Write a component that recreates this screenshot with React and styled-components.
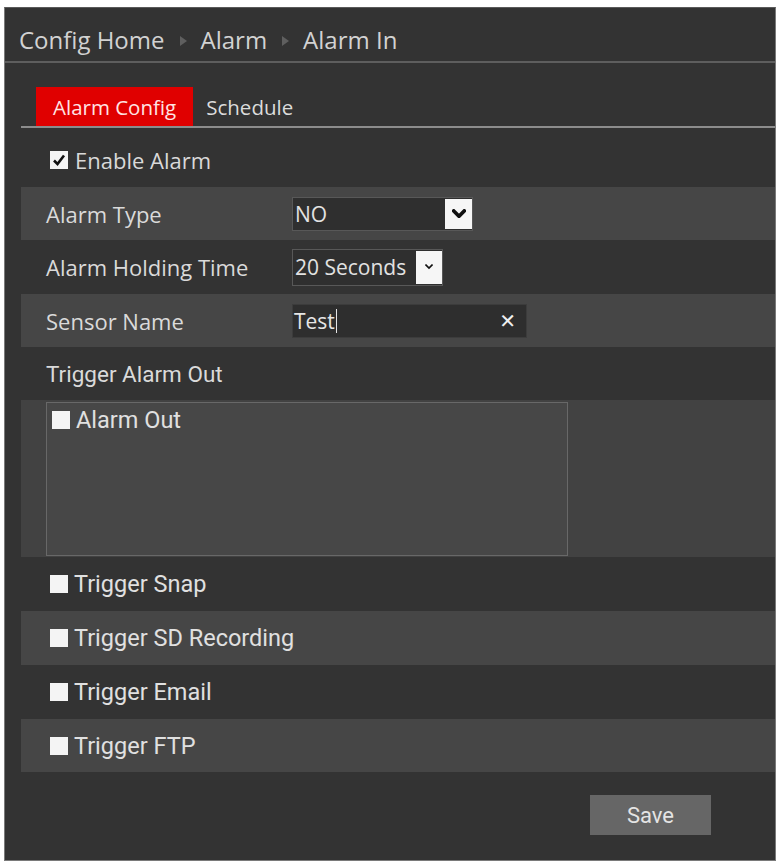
import React from "react";
import styled, { createGlobalStyle } from "styled-components";

const GlobalStyle = createGlobalStyle`
  html, body { margin: 0; padding: 0; background: #ffffff; }
  * { box-sizing: border-box; }
`;

const Panel = styled.div`
  margin: 7px 3px 0 4px;
  width: 772px;
  height: 854px;
  background: #333333;
  border: 1px solid #7a7a7a;
  border-top-color: #5a5a5a;
  font-family: "Open Sans", "Liberation Sans", sans-serif;
  color: #d9d9d9;
  display: flex;
  flex-direction: column;
`;

const Breadcrumb = styled.div`
  height: 55px;
  padding: 15px 0 0 14px;
  display: flex;
  align-items: flex-start;
  border-bottom: 2px solid #5e5e5e;
  font-size: 24px;
  line-height: 33px;
  color: #d2d2d2;
`;

const Crumb = styled.span`
  white-space: nowrap;
`;

const CrumbArrow = styled.span`
  display: inline-block;
  width: 0;
  height: 0;
  margin: 13px 14px 0 15px;
  border-top: 5px solid transparent;
  border-bottom: 5px solid transparent;
  border-left: 7px solid #5f5f5f;
`;

const Content = styled.div`
  padding-left: 16px;
  display: flex;
  flex-direction: column;
`;

const TabBar = styled.div`
  margin-top: 24px;
  padding-left: 15px;
  height: 41px;
  display: flex;
  align-items: stretch;
  border-bottom: 2px solid #8c8c8c;
`;

const Tab = styled.div`
  height: 39px;
  padding: 1px ${(p) => (p.$active ? "17px" : "13px")} 0;
  display: flex;
  align-items: center;
  font-size: 20.5px;
  white-space: nowrap;
  background: ${(p) => (p.$active ? "#e00000" : "transparent")};
  color: ${(p) => (p.$active ? "#ffe4e4" : "#dcdcdc")};
`;

const EnableRow = styled.div`
  height: 59px;
  padding: 5px 0 0 29px;
  display: flex;
  align-items: center;
  font-size: 22px;
`;

const Box = styled.span`
  flex: none;
  width: 18px;
  height: 18px;
  margin-right: ${(p) => p.$gap || 6}px;
  background: #f4f4f4;
  display: inline-flex;
  align-items: center;
  justify-content: center;
`;

const Row = styled.div`
  height: ${(p) => p.$h}px;
  background: ${(p) => (p.$light ? "#464646" : "#333333")};
  display: grid;
  grid-template-columns: 246px auto;
  align-items: center;
  padding-left: 25px;
  font-size: 22px;
`;

const Label = styled.span`
  white-space: nowrap;
  color: #dadada;
`;

const Select = styled.div`
  width: ${(p) => p.$w}px;
  height: ${(p) => p.$h}px;
  background: #2f2f2f;
  border: 1px solid #585858;
  display: flex;
  align-items: stretch;
  color: #e2e2e2;
  font-size: 21px;
`;

const SelectValue = styled.span`
  flex: 1;
  padding-left: 2px;
  display: flex;
  align-items: center;
  white-space: nowrap;
  overflow: hidden;
`;

const SelectArrow = styled.span`
  flex: none;
  width: ${(p) => p.$w}px;
  margin: 1px 0;
  background: #f6f6f6;
  display: flex;
  align-items: center;
  justify-content: center;
`;

const TextInput = styled.div`
  width: 235px;
  height: 34px;
  background: #2e2e2e;
  border: 1px solid #3c3c3c;
  display: flex;
  align-items: center;
  padding: 0 10px 0 1px;
  font-size: 21px;
  color: #e6e6e6;
`;

const Caret = styled.span`
  width: 1px;
  height: 24px;
  margin-left: 1px;
  background: #e6e6e6;
`;

const Spacer = styled.span`
  flex: 1;
`;

const Clear = styled.span`
  font-family: "DejaVu Sans", sans-serif;
  font-weight: bold;
  font-size: 20px;
  color: #f0f0f0;
`;

const SectionTitle = styled.div`
  height: 53px;
  padding-left: 25px;
  display: flex;
  align-items: center;
  font-family: Roboto, "Open Sans", sans-serif;
  font-size: 22.5px;
  color: #dadada;
`;

const OutArea = styled.div`
  height: 157px;
  background: #424242;
  padding: 2px 0 1px 25px;
`;

const OutBox = styled.div`
  width: 522px;
  height: 154px;
  background: #474747;
  border: 1px solid #686868;
  padding: 3px 0 0 5px;
`;

const CheckItem = styled.div`
  display: flex;
  align-items: center;
  font-family: Roboto, "Open Sans", sans-serif;
  font-size: 23.5px;
  color: #e0e0e0;
  height: ${(p) => (p.$h ? p.$h + "px" : "auto")};
  background: ${(p) => (p.$light ? "#464646" : "transparent")};
  padding-left: ${(p) => p.$pad || 0}px;
`;

const Footer = styled.div`
  flex: 1;
  display: flex;
  justify-content: flex-end;
  align-items: flex-start;
  padding: 23px 64px 0 0;
`;

const SaveButton = styled.button`
  width: 121px;
  height: 40px;
  border: none;
  background: #666666;
  color: #e4e4e4;
  font-family: Roboto, "Open Sans", sans-serif;
  font-size: 22px;
  padding: 0;
`;

const Chevron = ({ size = 12, stroke = 3 }) => (
  <svg width={size} height={size * 0.7} viewBox="0 0 12 8">
    <path d="M1.5 1.5 L6 6 L10.5 1.5" fill="none" stroke="#111" strokeWidth={stroke} strokeLinecap="square" />
  </svg>
);

const Tick = () => (
  <svg width="14" height="14" viewBox="0 0 14 14">
    <path d="M2 7.5 L5.5 11 L12 2.5" fill="none" stroke="#111" strokeWidth="2.6" />
  </svg>
);

const triggers = ["Trigger Snap", "Trigger SD Recording", "Trigger Email", "Trigger FTP"];
const triggerHeights = [54, 54, 54, 53];

export default function App() {
  return (
    <>
      <GlobalStyle />
      <Panel>
        <Breadcrumb>
          <Crumb>Config Home</Crumb>
          <CrumbArrow />
          <Crumb>Alarm</Crumb>
          <CrumbArrow />
          <Crumb>Alarm In</Crumb>
        </Breadcrumb>
        <Content>
          <TabBar>
            <Tab $active>Alarm Config</Tab>
            <Tab>Schedule</Tab>
          </TabBar>
          <EnableRow>
            <Box $gap={7}>
              <Tick />
            </Box>
            Enable Alarm
          </EnableRow>
          <Row $h={53} $light>
            <Label>Alarm Type</Label>
            <Select $w={181} $h={34}>
              <SelectValue>NO</SelectValue>
              <SelectArrow $w={27}>
                <Chevron size={14} stroke={3.2} />
              </SelectArrow>
            </Select>
          </Row>
          <Row $h={54}>
            <Label>Alarm Holding Time</Label>
            <Select $w={151} $h={37}>
              <SelectValue>20 Seconds</SelectValue>
              <SelectArrow $w={26}>
                <Chevron size={8} stroke={2.6} />
              </SelectArrow>
            </Select>
          </Row>
          <Row $h={53} $light>
            <Label>Sensor Name</Label>
            <TextInput>
              Test
              <Caret />
              <Spacer />
              <Clear>✕</Clear>
            </TextInput>
          </Row>
          <SectionTitle>Trigger Alarm Out</SectionTitle>
          <OutArea>
            <OutBox>
              <CheckItem>
                <Box $gap={6} />
                Alarm Out
              </CheckItem>
            </OutBox>
          </OutArea>
          {triggers.map((t, i) => (
            <CheckItem key={t} $h={triggerHeights[i]} $light={i % 2 === 1} $pad={29}>
              <Box $gap={6} />
              {t}
            </CheckItem>
          ))}
        </Content>
        <Footer>
          <SaveButton>Save</SaveButton>
        </Footer>
      </Panel>
    </>
  );
}
